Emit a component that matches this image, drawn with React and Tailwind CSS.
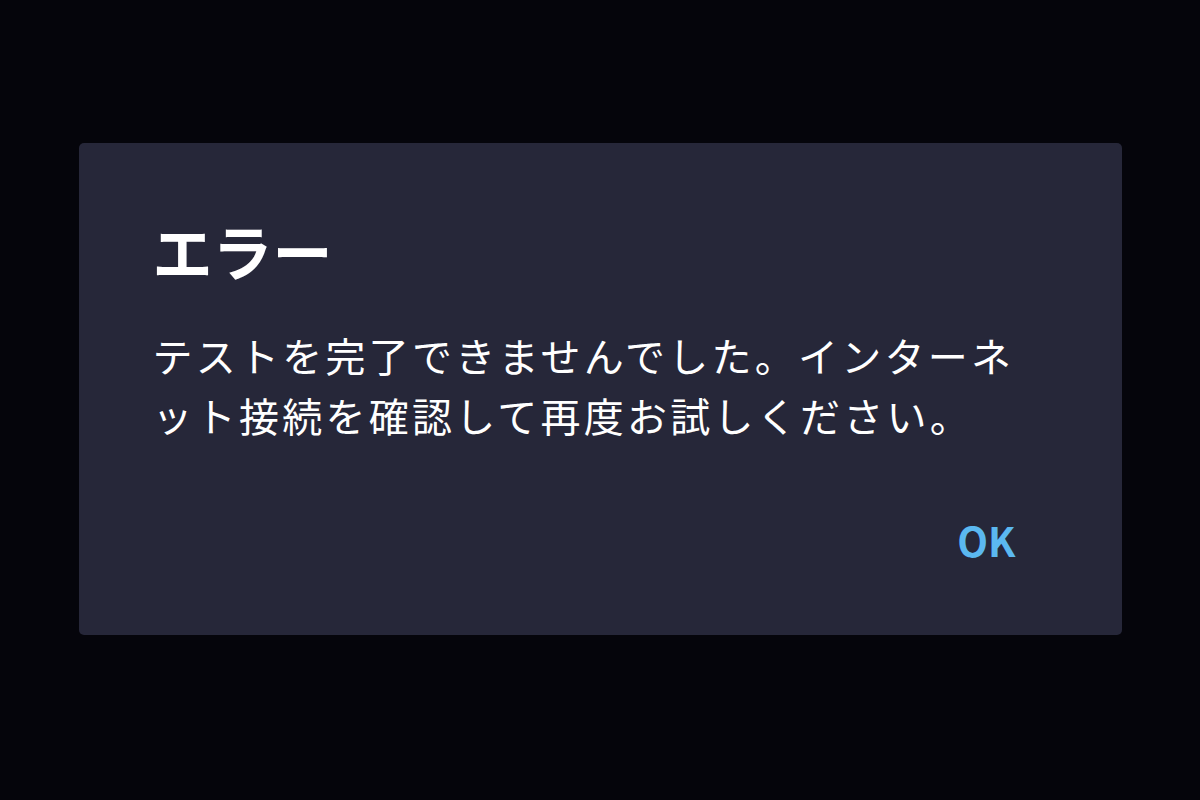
import React from 'react';

const ErrorDialog = () => {
  return (
    <div className="w-[1043px] h-[492px] bg-[#262739] rounded-[5px] flex flex-col pl-[74px] pr-[77px] pt-[72px]">
      <h2 className="text-[60px] leading-[70px] font-bold text-white">
        エラー
      </h2>
      <p className="mt-[40px] text-[40px] leading-[60px] tracking-[3.25px] text-white">
        テストを完了できませんでした。インターネット接続を確認して再度お試しください。
      </p>
      <div className="flex justify-end mt-[67px]">
        <button className="text-[40px] leading-[56px] font-bold text-[#5bb8f0] pr-[29px]">OK</button>
      </div>
    </div>
  );
};

export default function App() {
  return (
    <div
      className="w-[1200px] h-[800px] bg-[#05050b] flex justify-center pt-[143px]"
      style={{ fontFamily: '"Noto Sans CJK JP", "Noto Sans", sans-serif' }}
    >
      <ErrorDialog />
    </div>
  );
}
